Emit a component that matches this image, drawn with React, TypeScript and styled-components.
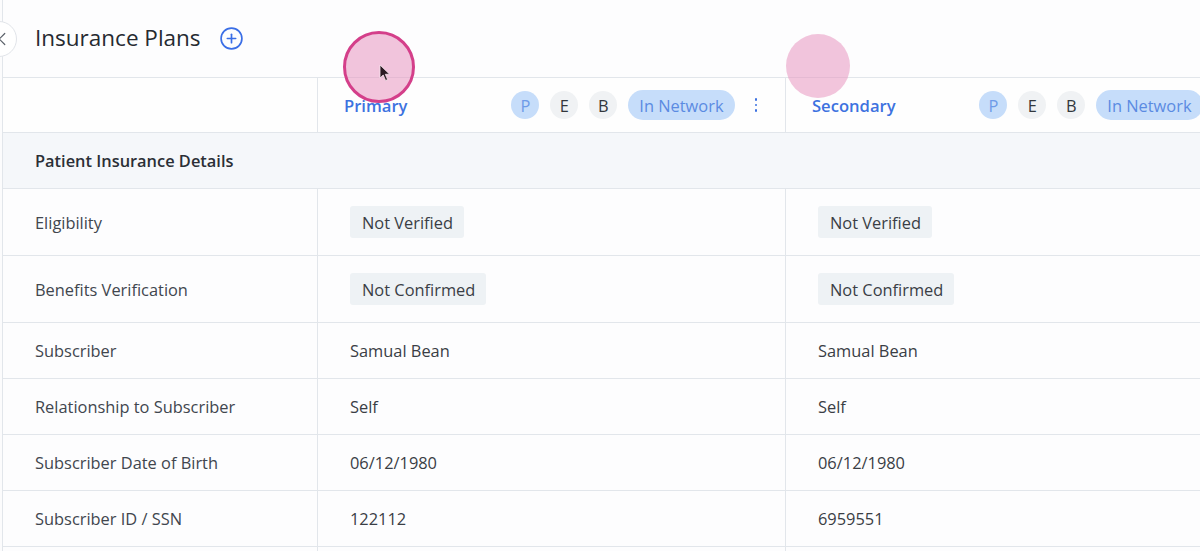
import React from 'react';
import styled, { createGlobalStyle } from 'styled-components';
import { ChevronLeft, CirclePlus } from 'lucide-react';

const GlobalStyle = createGlobalStyle`
  html, body {
    margin: 0;
    padding: 0;
    background: #fcfcfd;
    font-family: "Open Sans", "Noto Sans", sans-serif;
    color: #30343b;
    overflow: hidden;
  }
`;

const Page = styled.div`
  position: relative;
  width: 1200px;
  height: 551px;
  overflow: hidden;
`;

const Panel = styled.div`
  margin-left: 2px;
  border-left: 1px solid #e2e6eb;
  height: 100%;
  background: #fdfdfe;
`;

const TitleBar = styled.header`
  display: flex;
  align-items: center;
  gap: 18px;
  height: 77px;
  padding-left: 32px;
  box-sizing: border-box;
`;

const Title = styled.h1`
  margin: 0;
  font-size: 22.5px;
  font-weight: 400;
  color: #262a31;
  line-height: 1;
`;

const IconButton = styled.button`
  display: flex;
  align-items: center;
  justify-content: center;
  border: 0;
  padding: 0;
  background: none;
  color: #3a6ee6;
  cursor: pointer;
`;

const BackButton = styled.button`
  position: absolute;
  left: -19px;
  top: 21px;
  width: 36px;
  height: 36px;
  border-radius: 50%;
  border: 1px solid #e1e4e9;
  background: #fff;
  display: flex;
  align-items: center;
  justify-content: flex-end;
  padding: 0 3px 0 0;
  color: #5a6069;
`;

const Table = styled.div`
  display: grid;
  grid-template-columns: 315px 468px 468px;
  border-top: 1px solid #e2e6eb;
`;

const HeadCell = styled.div<{ $first?: boolean }>`
  display: flex;
  align-items: center;
  height: 54px;
  padding: ${(p) => (p.$first ? '0' : '0 26px')};
  border-right: 1px solid #e2e6eb;
  border-bottom: 1px solid #e2e6eb;
  background: #fefefe;
`;

const PlanName = styled.span`
  font-size: 16.6px;
  font-weight: 600;
  color: #3d72e0;
  margin-right: auto;
`;

const Badges = styled.div`
  display: flex;
  align-items: center;
  gap: 11px;
`;

const Circle = styled.span<{ $active?: boolean }>`
  width: 28px;
  height: 28px;
  border-radius: 50%;
  display: flex;
  align-items: center;
  justify-content: center;
  font-size: 16.4px;
  background: ${(p) => (p.$active ? '#c6ddfa' : '#f0f2f4')};
  color: ${(p) => (p.$active ? '#6e9be8' : '#33373d')};
`;

const Pill = styled.span`
  height: 30px;
  padding: 0 11px;
  border-radius: 15px;
  display: flex;
  align-items: center;
  font-size: 16.4px;
  background: #c6ddfa;
  color: #5b8be2;
  white-space: nowrap;
`;

const Kebab = styled.span`
  display: flex;
  flex-direction: column;
  gap: 3px;
  margin-left: 20px;
  margin-right: 2px;
  & > i {
    width: 2.5px;
    height: 2.5px;
    border-radius: 50%;
    background: #3d72e0;
  }
`;

const Section = styled.div`
  grid-column: 1 / -1;
  height: 55px;
  display: flex;
  align-items: center;
  padding-left: 32px;
  background: #f5f7fa;
  border-bottom: 1px solid #e2e6eb;
  font-size: 16.4px;
  font-weight: 600;
  color: #2b2f36;
`;

const Cell = styled.div<{ $tall?: boolean; $label?: boolean }>`
  height: ${(p) => (p.$tall ? '66px' : '55px')};
  display: flex;
  align-items: center;
  padding-left: 32px;
  border-right: 1px solid #e2e6eb;
  border-bottom: 1px solid #e2e6eb;
  font-size: 16.4px;
  color: ${(p) => (p.$label ? '#41464e' : '#3a3e45')};
  white-space: nowrap;
`;

const Tag = styled.span`
  display: inline-flex;
  align-items: center;
  height: 32px;
  padding: 0 11px 0 12px;
  border-radius: 3px;
  background: #eef2f5;
  color: #3a3e45;
`;

const Ripple = styled.div<{ $x: number; $y: number; $r: number; $ring?: boolean }>`
  position: absolute;
  left: ${(p) => p.$x - p.$r}px;
  top: ${(p) => p.$y - p.$r}px;
  width: ${(p) => p.$r * 2}px;
  height: ${(p) => p.$r * 2}px;
  border-radius: 50%;
  box-sizing: border-box;
  background: rgba(232, 150, 192, 0.55);
  border: ${(p) => (p.$ring ? '3px solid #d43f8a' : '0')};
  pointer-events: none;
`;

const Pointer = styled.svg`
  position: absolute;
  left: 379px;
  top: 64px;
`;

type Row = { label: string; primary: string; secondary: string; tag?: boolean };

const rows: Row[] = [
  { label: 'Eligibility', primary: 'Not Verified', secondary: 'Not Verified', tag: true },
  { label: 'Benefits Verification', primary: 'Not Confirmed', secondary: 'Not Confirmed', tag: true },
  { label: 'Subscriber', primary: 'Samual Bean', secondary: 'Samual Bean' },
  { label: 'Relationship to Subscriber', primary: 'Self', secondary: 'Self' },
  { label: 'Subscriber Date of Birth', primary: '06/12/1980', secondary: '06/12/1980' },
  { label: 'Subscriber ID / SSN', primary: '122112', secondary: '6959551' },
];

const PlanHead: React.FC<{ name: string }> = ({ name }) => (
  <HeadCell>
    <PlanName>{name}</PlanName>
    <Badges>
      <Circle $active>P</Circle>
      <Circle>E</Circle>
      <Circle>B</Circle>
      <Pill>In Network</Pill>
    </Badges>
    <Kebab>
      <i />
      <i />
      <i />
    </Kebab>
  </HeadCell>
);

export default function App() {
  return (
    <Page>
      <GlobalStyle />
      <Panel>
        <TitleBar>
          <Title>Insurance Plans</Title>
          <IconButton aria-label="Add plan">
            <CirclePlus size={25} strokeWidth={1.6} />
          </IconButton>
        </TitleBar>
        <Table>
          <HeadCell $first />
          <PlanHead name="Primary" />
          <PlanHead name="Secondary" />
          <Section>Patient Insurance Details</Section>
          {rows.map((r) => (
            <React.Fragment key={r.label}>
              <Cell $label $tall={r.tag}>{r.label}</Cell>
              <Cell $tall={r.tag}>{r.tag ? <Tag>{r.primary}</Tag> : r.primary}</Cell>
              <Cell $tall={r.tag}>{r.tag ? <Tag>{r.secondary}</Tag> : r.secondary}</Cell>
            </React.Fragment>
          ))}
          <Cell $label />
          <Cell />
          <Cell />
        </Table>
      </Panel>
      <BackButton aria-label="Back">
        <ChevronLeft size={22} strokeWidth={1.3} />
      </BackButton>
      <Ripple $x={379} $y={67} $r={36} $ring />
      <Ripple $x={818} $y={66} $r={32} />
      <Pointer width="12" height="18" viewBox="0 0 12 18">
        <path d="M1 1 L1 14 L4.2 11 L6.6 16.5 L8.6 15.6 L6.3 10.3 L10.6 10.2 Z" fill="#2a1a22" stroke="#f6e6ee" strokeWidth="0.8" />
      </Pointer>
    </Page>
  );
}
